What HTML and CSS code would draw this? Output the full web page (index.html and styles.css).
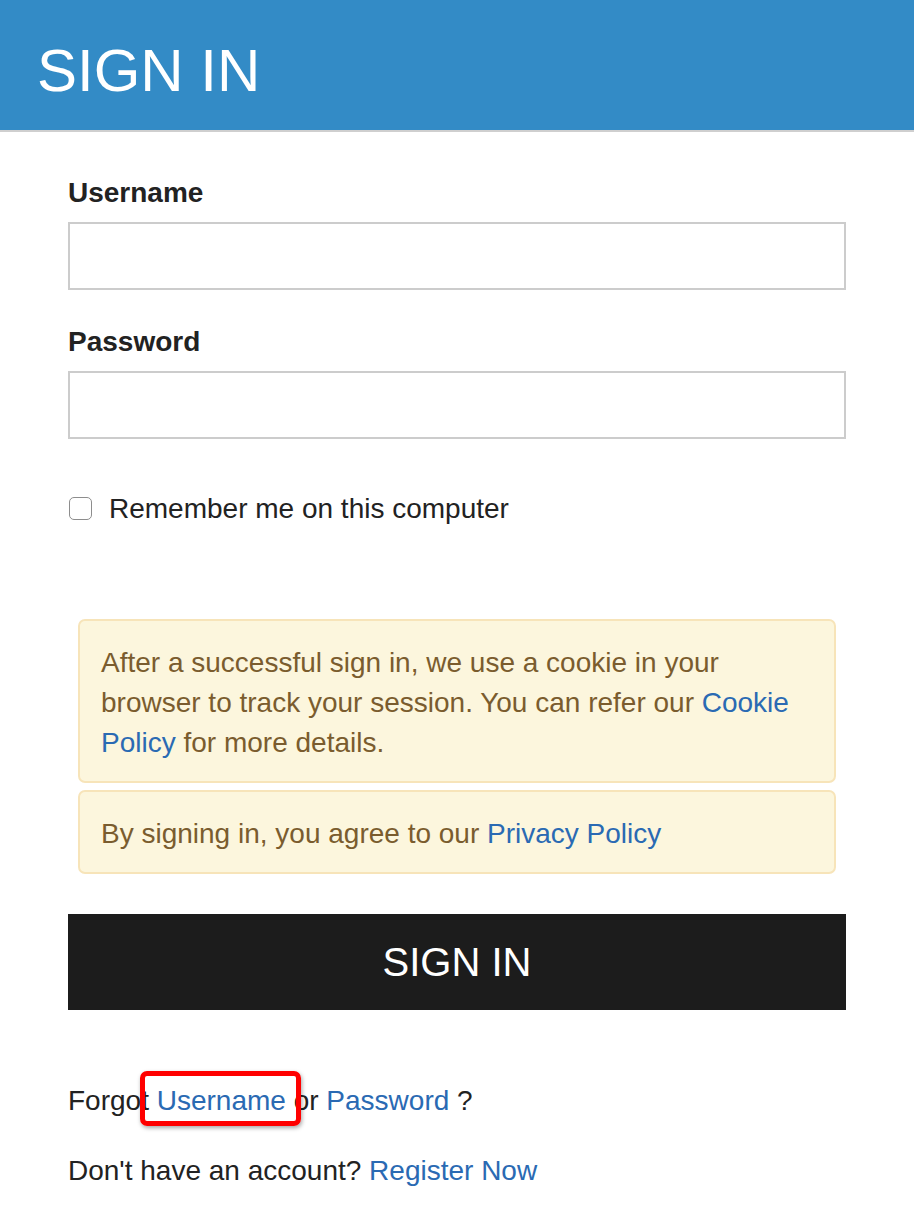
FILE: index.html
```html
<!DOCTYPE html>
<html>
<head>
<meta charset="utf-8">
<link rel="stylesheet" href="styles.css">
</head>
<body>
<header class="topbar">
  <h1 class="title">SIGN IN</h1>
</header>
<main class="content">
  <form class="form">
    <label class="label" for="u">Username</label>
    <input class="field" id="u" type="text">
    <label class="label label-pw" for="p">Password</label>
    <input class="field" id="p" type="password">
    <div class="remember">
      <span class="check"></span>
      <span class="remember-text">Remember me on this computer</span>
    </div>
    <div class="alert alert-first">After a successful sign in, we use a cookie in your browser to track your session. You can refer our <a class="link" href="#">Cookie</a> <a class="link" href="#">Policy</a> for more details.</div>
    <div class="alert">By signing in, you agree to our <a class="link" href="#">Privacy Policy</a></div>
    <button class="submit" type="button">SIGN IN</button>
  </form>
  <p class="line line-forgot">Forgot <span class="hl"><a class="link" href="#">Username</a></span> or <a class="link" href="#">Password</a> ?</p>
  <p class="line line-register">Don't have an account? <a class="link" href="#">Register Now</a></p>
</main>
</body>
</html>
```
FILE: styles.css
```css
* { box-sizing: border-box; }
html, body { margin: 0; padding: 0; background: #fff; }
body {
  font-family: "Liberation Sans", Arial, sans-serif;
  color: #222;
}
.topbar {
  height: 132px;
  background: #338bc6;
  border-bottom: 2px solid #cfcfcf;
  padding: 0 0 0 37px;
  display: flex;
  align-items: center;
}
.title {
  margin: 0;
  font-weight: normal;
  font-size: 60px;
  color: #fff;
  line-height: 1;
  padding-top: 12px;
}
.content {
  padding: 0 68px;
}
.form {
  display: flex;
  flex-direction: column;
}
.label {
  font-weight: bold;
  font-size: 28px;
  line-height: 30px;
  margin-top: 46px;
  margin-bottom: 14px;
  color: #222;
}
.label-pw { margin-top: 37px; }
.field {
  display: block;
  width: 100%;
  height: 68px;
  border: 2px solid #cccccc;
  border-radius: 0;
  background: #fff;
  font-size: 26px;
  margin: 0;
}
.remember {
  display: flex;
  align-items: center;
  margin-top: 58px;
  height: 23px;
  gap: 17px;
}
.check {
  width: 23px;
  height: 23px;
  border: 1.5px solid #8d8d8d;
  border-radius: 5px;
  background: #fff;
  margin-left: 1px;
  flex: none;
}
.remember-text {
  font-size: 28px;
  line-height: 30px;
  color: #222;
}
.alert {
  margin: 7px 10px 0;
  background: #fcf6dd;
  border: 2px solid #f7e4b9;
  border-radius: 7px;
  padding: 22px 21px 18px;
  font-size: 28px;
  line-height: 40px;
  color: #7a5c2e;
}
.alert-first { margin-top: 99px; }
.link {
  color: #2a6ab3;
  text-decoration: none;
}
.submit {
  margin-top: 40px;
  height: 96px;
  width: 100%;
  background: #1c1c1c;
  color: #fff;
  border: none;
  border-radius: 0;
  font-family: "Liberation Sans", Arial, sans-serif;
  font-size: 40px;
  padding: 0;
}
.line {
  margin: 0;
  font-size: 28px;
  line-height: 30px;
  color: #222;
}
.line-forgot { margin-top: 76px; }
.line-register { margin-top: 40px; }
.hl {
  position: relative;
}
.hl::after {
  content: "";
  position: absolute;
  left: -17px;
  right: -15px;
  top: -14px;
  bottom: -10px;
  border: 5px solid #ff0000;
  border-radius: 7px;
  box-shadow: 1px 2px 4px rgba(0,0,0,0.35);
  pointer-events: none;
}
```
